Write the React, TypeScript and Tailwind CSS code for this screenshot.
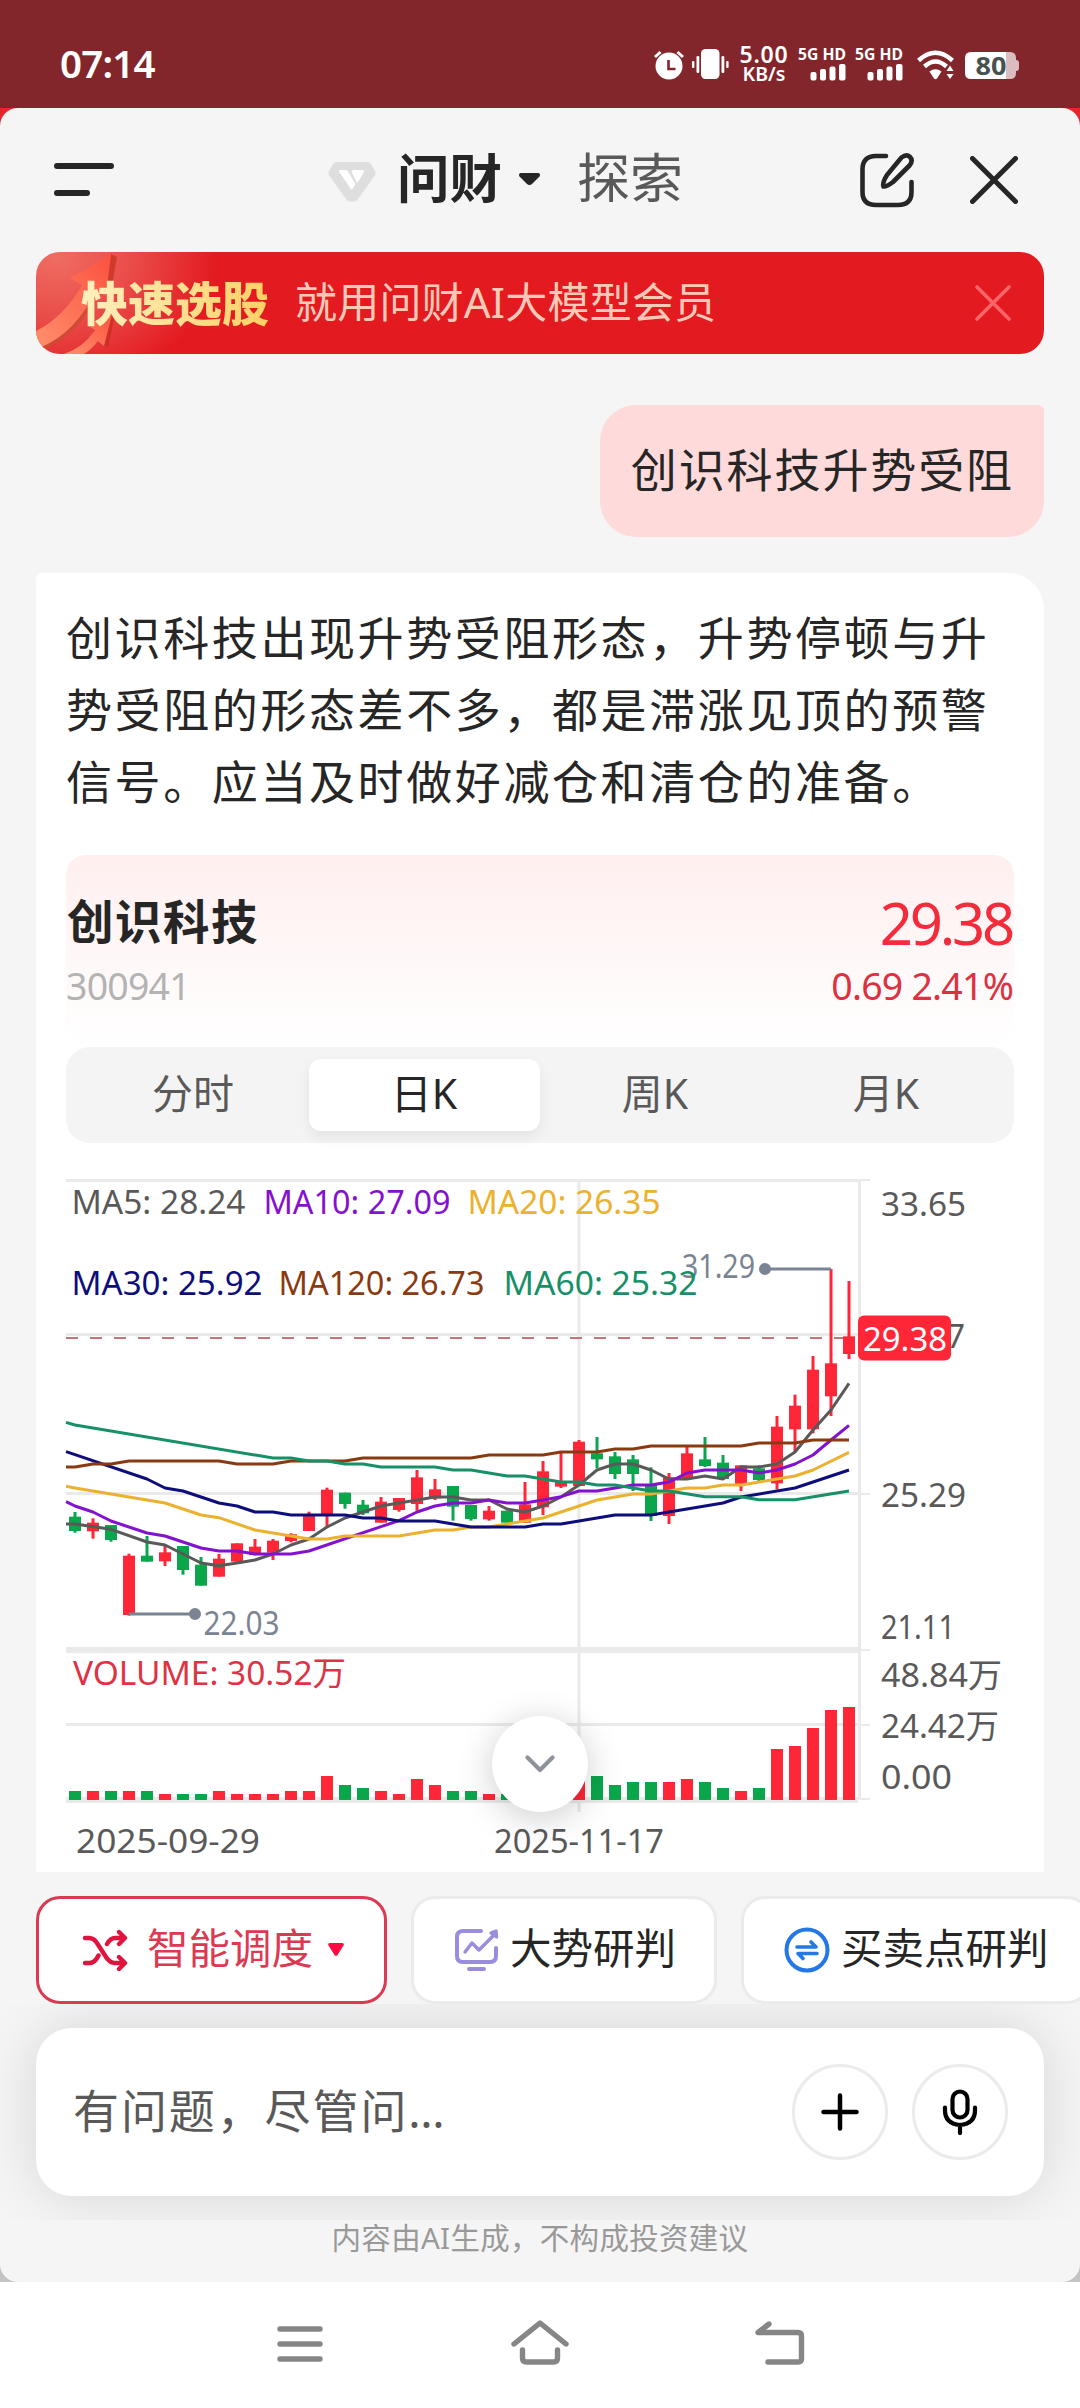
import type { ReactNode } from 'react';

type Candle = [high: number, top: number, bottom: number, low: number, up: boolean, volumeTop: number];

// Values are thirds of a pixel below PRICE_TOP, volumes below VOLUME_TOP.
const PRICE_TOP = 1390;
const VOLUME_TOP = 1630;
const px = (i: number) => 75 + 18 * i;
const py = (v: number) => PRICE_TOP + v / 3;

const candles: Candle[] = [
  [366, 380, 423, 428, false, 483],
  [385, 398, 424, 446, true, 483],
  [405, 405, 450, 455, false, 483],
  [491, 497, 675, 677, true, 483],
  [438, 497, 515, 515, false, 483],
  [468, 487, 514, 528, true, 492],
  [468, 468, 540, 554, false, 492],
  [501, 524, 587, 587, false, 492],
  [492, 506, 560, 560, true, 483],
  [460, 460, 515, 515, true, 492],
  [447, 470, 495, 496, true, 492],
  [447, 452, 488, 510, true, 492],
  [430, 433, 453, 457, true, 483],
  [365, 378, 423, 423, true, 483],
  [293, 299, 375, 412, true, 438],
  [308, 308, 342, 356, false, 465],
  [330, 344, 370, 375, false, 474],
  [321, 335, 398, 398, true, 483],
  [324, 324, 360, 365, true, 492],
  [240, 262, 342, 362, true, 447],
  [267, 298, 325, 330, true, 465],
  [288, 288, 350, 392, false, 483],
  [345, 345, 387, 392, false, 483],
  [348, 362, 388, 392, true, 492],
  [362, 362, 398, 398, false, 492],
  [276, 343, 398, 398, true, 480],
  [213, 244, 352, 375, true, 470],
  [185, 275, 290, 294, true, 465],
  [150, 155, 288, 288, true, 447],
  [141, 190, 208, 235, false, 438],
  [186, 199, 252, 267, false, 465],
  [195, 208, 252, 303, false, 456],
  [232, 285, 378, 393, false, 456],
  [249, 262, 378, 402, true, 456],
  [168, 190, 267, 267, true, 447],
  [141, 208, 228, 231, false, 456],
  [195, 218, 267, 267, false, 474],
  [226, 226, 285, 303, true, 483],
  [226, 235, 270, 273, false, 474],
  [78, 110, 280, 298, true, 357],
  [14, 47, 118, 185, true, 348],
  [-102, -61, 118, 130, true, 294],
  [-363, -80, 19, 78, true, 240],
  [-327, -161, -108, -93, true, 231],
];

const averages: { color: string; points: [number, number][] }[] = [
  {
    color: '#595959',
    points: [[-0.5, 402], [0, 402], [2, 418], [4, 456], [5, 465], [6, 492], [7, 519], [8, 527], [9, 519], [10, 510], [11, 492], [12, 465], [13, 447], [14, 411], [15, 384], [16, 366], [17, 348], [19, 330], [20, 321], [21, 321], [22, 330], [23, 330], [24, 357], [25, 366], [26, 348], [27, 321], [28, 285], [29, 240], [30, 222], [31, 222], [32, 240], [33, 267], [34, 267], [35, 258], [36, 267], [37, 231], [38, 231], [39, 222], [40, 186], [41, 120], [42, 60], [43, -20]],
  },
  {
    color: '#8411cf',
    points: [[-0.5, 335], [0, 348], [1, 366], [2, 393], [4, 429], [5, 438], [7, 474], [8, 483], [9, 483], [10, 492], [12, 492], [13, 483], [17, 410], [18, 392], [19, 366], [20, 348], [21, 339], [22, 339], [23, 330], [24, 339], [25, 339], [26, 330], [27, 320], [28, 303], [29, 303], [30, 294], [31, 285], [32, 285], [33, 276], [34, 249], [35, 240], [37, 240], [38, 249], [39, 240], [40, 222], [41, 195], [42, 150], [43, 106]],
  },
  {
    color: '#ebb12f',
    points: [[-0.5, 289], [0, 294], [5, 339], [7, 375], [8, 383], [10, 420], [13, 447], [14, 447], [15, 438], [18, 438], [20, 420], [21, 420], [22, 411], [23, 411], [24, 402], [26, 384], [29, 330], [31, 312], [32, 312], [34, 294], [35, 294], [36, 285], [37, 285], [40, 258], [41, 240], [43, 187]],
  },
  {
    color: '#0d0d7c',
    points: [[-0.5, 185], [0, 194], [4, 267], [5, 294], [6, 303], [8, 339], [9, 348], [10, 366], [11, 366], [12, 375], [15, 375], [16, 384], [17, 384], [18, 393], [20, 393], [21, 402], [22, 411], [25, 411], [26, 402], [27, 402], [30, 375], [32, 375], [36, 339], [37, 321], [40, 294], [43, 240]],
  },
  {
    color: '#8a3a10',
    points: [[-0.5, 231], [0, 231], [1, 222], [2, 222], [3, 213], [8, 213], [9, 222], [11, 222], [12, 213], [15, 213], [16, 204], [22, 204], [23, 195], [26, 195], [27, 186], [29, 186], [30, 177], [31, 177], [32, 168], [37, 168], [38, 159], [40, 159], [41, 150], [43, 150]],
  },
  {
    color: '#179068',
    points: [[-0.5, 97], [0, 105], [11, 204], [12, 204], [13, 213], [14, 213], [15, 222], [16, 222], [17, 231], [20, 231], [21, 240], [22, 240], [24, 258], [25, 258], [27, 276], [28, 276], [29, 285], [30, 285], [32, 303], [33, 303], [35, 320], [37, 320], [38, 329], [40, 329], [43, 303]],
  },
];

const labels: { text: string; x: number; y: number; width: number; color: string }[] = [
  { text: '31.29', x: 682, y: 1277.5, width: 73, color: '#7b8492' },
  { text: '22.03', x: 203.5, y: 1635, width: 76, color: '#7b8492' },
  { text: 'MA5: 28.24', x: 71.5, y: 1214, width: 174, color: '#595959' },
  { text: 'MA10: 27.09', x: 263.5, y: 1214, width: 187, color: '#8411cf' },
  { text: 'MA20: 26.35', x: 467.5, y: 1214, width: 193, color: '#ebb12f' },
  { text: 'MA30: 25.92', x: 71.5, y: 1294.5, width: 191, color: '#0d0d7c' },
  { text: 'MA120: 26.73', x: 278.5, y: 1294.5, width: 206, color: '#8a3a10' },
  { text: 'MA60: 25.32', x: 503.5, y: 1294.5, width: 194, color: '#179068' },
  { text: 'VOLUME: 30.52万', x: 73, y: 1684.5, width: 273, color: '#dd3344' },
  { text: '33.65', x: 881, y: 1215.5, width: 85, color: '#595959' },
  { text: '29.47', x: 881, y: 1347.5, width: 84, color: '#595959' },
  { text: '25.29', x: 881, y: 1506.5, width: 85, color: '#595959' },
  { text: '21.11', x: 881, y: 1638.5, width: 74, color: '#595959' },
  { text: '48.84万', x: 881, y: 1686.5, width: 121, color: '#595959' },
  { text: '24.42万', x: 881, y: 1738, width: 118, color: '#595959' },
  { text: '0.00', x: 881, y: 1788.5, width: 71, color: '#595959' },
  { text: '2025-09-29', x: 76, y: 1852.5, width: 184, color: '#595959' },
  { text: '2025-11-17', x: 494, y: 1852.5, width: 170, color: '#595959' },
];

const tabs = ['分时', '日K', '周K', '月K'];

export default function App() {
  return (
    <div className="flex h-[2408px] w-[1080px] flex-col overflow-hidden bg-white font-['Noto_Sans','Noto_Sans_CJK_SC',sans-serif] text-[#262626]">
      <StatusBar />
      <div className="h-[2174px] bg-linear-to-b from-[#e6252d] from-50% to-[#c4c4c4] to-50%">
        <div className="flex h-full flex-col overflow-hidden rounded-[18px] bg-[#f5f5f5]">
          <Header />
          <Banner />
          <div className="mt-[51px] mr-9 flex h-[132px] items-center self-end rounded-[36px] rounded-tr-[6px] bg-[#fedbda] pr-[30px] pb-[4px] pl-[31px] text-[46px] tracking-[1.900px]">
            创识科技升势受阻
          </div>
          <Answer />
          <Chips />
          <InputArea />
          <p className="text-center text-[29.500px] leading-[36px] tracking-[0.300px] text-[#999]">
            内容由AI生成，不构成投资建议
          </p>
        </div>
      </div>
      <NavBar />
    </div>
  );
}

function StatusBar() {
  return (
    <div className="flex h-[108px] shrink-0 items-start bg-[#83262b] pl-[60px] text-white">
      <span className="mt-[35px] w-[593px] text-[38.500px] leading-[56px] font-semibold tracking-[-0.800px]">07:14</span>
      <svg className="mt-[49px] shrink-0" width="31" height="31" viewBox="0 0 31 31" fill="none">
        <circle cx="16" cy="17" r="13.500" fill="#fff" />
        <path d="M2 8 7.500 3M30 8 24.500 3" stroke="#fff" strokeWidth="3" />
        <path d="M15.500 11v9h7" stroke="#83262b" strokeWidth="2.600" />
      </svg>
      <svg className="mt-[48px] ml-[8px] shrink-0" width="37" height="32" viewBox="0 0 37 32" fill="#fff">
        <rect x="9" y="1" width="18.500" height="30" rx="4.500" />
        <rect y="13" width="2.400" height="7" rx="1" />
        <rect x="4.500" y="8" width="2.800" height="17" rx="1.200" />
        <rect x="29.500" y="8" width="2.800" height="17" rx="1.200" />
        <rect x="34.200" y="13" width="2.400" height="7" rx="1" />
      </svg>
      <div className="mt-[44px] ml-[9px] w-[52px] text-center font-semibold">
        <div className="text-[23px] leading-[21px] tracking-[0.800px]">5.00</div>
        <div className="text-[19.500px] leading-[18px]">KB/s</div>
      </div>
      <Signal />
      <Signal />
      <svg className="mt-[49px] ml-[13px] shrink-0" width="38" height="31" viewBox="0 0 38 31" fill="none" stroke="#fff">
        <path d="M1.500 11.500Q18.500-4 35.500 11.500M7.500 17.500Q18.500 7.500 29.500 17.500" strokeWidth="4.400" />
        <path d="M12.500 22.500Q18.500 18 24.500 22.500L20 29.500q-1.500 1.500-3 0Z" fill="#fff" stroke="none" />
        <path d="M33 16.500l3.500 5.500h-7zM33 30l3.500-5h-7z" fill="#fff" stroke="none" />
      </svg>
      <svg className="mt-[48px] ml-[10px] shrink-0 overflow-visible" width="56" height="36" viewBox="0 -3 56 36">
        <path d="M40 1h5q6 0 6 6v2q3 0 3 3v5q0 3-3 3v2q0 6-6 6h-5z" fill="#dbbdc0" />
        <path d="M6 1h35v27H6q-6 0-6-6V7q0-6 6-6Z" fill="#fff" />
        <text x="10.500" y="23.500" fontSize="24.500" fontWeight="700" textLength="31" lengthAdjust="spacingAndGlyphs" fill="#485050">80</text>
      </svg>
    </div>
  );
}

function Signal() {
  return (
    <svg className="mt-[41px] ml-[8px] shrink-0 overflow-visible" width="49" height="40" viewBox="0 -4 49 40" fill="#fff">
      <text x="0" y="14.500" fontSize="16.500" fontWeight="700" textLength="48" lengthAdjust="spacingAndGlyphs">5G HD</text>
      <rect x="12.500" y="27" width="6" height="8.500" rx="2" />
      <rect x="22" y="24" width="6" height="11.500" rx="2" />
      <rect x="31.500" y="21.500" width="6" height="14" rx="2" />
      <rect x="41" y="19" width="6.500" height="16.500" rx="2" />
    </svg>
  );
}

function Header() {
  return (
    <header className="flex h-[144px] shrink-0 items-center pl-[54px]">
      <svg width="60" height="34" viewBox="0 0 60 34" stroke="#262626" strokeWidth="6" strokeLinecap="round">
        <path d="M3 3h54M3 30h30" />
      </svg>
      <svg className="mt-[3px] ml-[214px]" width="48" height="41" viewBox="0 0 48 41">
        <path d="M9 1h30q2.500 0 4 2l4 7q1.200 2.500-.5 5L30 38q-2 2.500-4 2.500h-4q-2.500 0-4-2.500L1.500 15q-1.700-2.500-.5-5l4-7q1.500-2 4-2Z" fill="#dedede" />
        <path d="M12.500 9H18q1 0 1.700 1L27.500 23l-3 5q-.9 1-1.700 0L11 10.500q-.5-1.500 1.500-1.500ZM25.500 9h9.500q2 0 1 2l-6 10q-.7 1-1.400 0l-4.500-9q-1-3 1.400-3Z" fill="#fff" />
      </svg>
      <h1 className="mb-[5px] ml-[21px] text-[52.500px] leading-[72px] font-bold">问财</h1>
      <svg className="mt-[-2px] ml-[16px]" width="24" height="14" viewBox="0 0 24 14">
        <path d="M2.500 1h18q2.500 1 1 3.500l-7 7q-3 3-6 0l-7-7Q0 2 2.500 1Z" fill="#262626" />
      </svg>
      <span className="mb-[5px] ml-[35px] text-[53px] leading-[72px] text-[#595959]">探索</span>
      <svg className="ml-[176px]" width="56" height="56" viewBox="0 0 56 56" fill="none" stroke="#262626" strokeWidth="4.600" strokeLinecap="round" strokeLinejoin="round">
        <path d="M27 4H17Q3.500 4 3.500 17.500V40Q3.500 53 17 53h22q13.500 0 13.500-13V30" />
        <path d="M42.500 5.500q5-4 8.500-.5t-.5 8.500L34 30q-6.500 5-9.500 4.500Q23 31 28 23Z" />
      </svg>
      <svg className="ml-[55px]" width="48" height="48" viewBox="0 0 48 48" stroke="#262626" strokeWidth="5" strokeLinecap="round">
        <path d="m2.500 2.500 43 43M45.500 2.500l-43 43" />
      </svg>
    </header>
  );
}

function Banner() {
  return (
    <div className="relative mx-9 flex h-[102px] shrink-0 items-center overflow-hidden rounded-[24px] bg-[#e31b20] bg-[radial-gradient(ellipse_160px_130px_at_20px_5px,#ef6d62_0%,#e94a48_50%,#e31b20_100%)]">
      <svg className="absolute top-0 left-0" width="120" height="102" viewBox="0 0 120 102">
        <defs>
          <linearGradient id="arrow" x1="0" y1="1" x2="1" y2="0">
            <stop offset="0" stopColor="#ff8f6c" />
            <stop offset="1" stopColor="#fb5140" />
          </linearGradient>
        </defs>
        <path d="M75 2 81 5 74 45 68 38 72 20Z" fill="#d03a2a" />
        <path d="M0 79Q28 65 46 33L34 26 75 2 70 44 60 39Q40 80 6 95L0 84Z" fill="url(#arrow)" />
        <path d="M6 95Q40 80 60 39L62 40Q44 82 9 97Z" fill="#d04a34" />
        <path d="M80 57 72 96 67 92 74 60Z" fill="#cf2f24" />
        <path d="M28 102Q48 95 59 78L52 74 77 59 68 94 62 89Q56 97 48 102Z" fill="url(#arrow)" />
      </svg>
      <span className="relative ml-[45px] bg-linear-to-r from-[#fff0bd] to-[#ffd063] bg-clip-text text-[47px] leading-[70px] font-black text-transparent">
        快速选股
      </span>
      <span className="ml-[26px] pb-[2px] text-[42px] leading-[60px] tracking-[0.200px] text-[#ffc9b8]">就用问财AI大模型会员</span>
      <svg className="mr-[33px] ml-auto" width="36" height="36" viewBox="0 0 36 36" stroke="#ff6468" strokeWidth="3.600" strokeLinecap="round">
        <path d="m2 2 32 32M34 2 2 34" />
      </svg>
    </div>
  );
}

function Answer() {
  return (
    <section className="relative mx-9 mt-9 h-[1299px] shrink-0 rounded-tl-[6px] rounded-tr-[36px] bg-white pt-[28px]">
      <p className="pl-[30px] text-[46px] leading-[72px] tracking-[2.600px] whitespace-nowrap">
        创识科技出现升势受阻形态，升势停顿与升
        <br />
        势受阻的形态差不多，都是滞涨见顶的预警
        <br />
        信号。应当及时做好减仓和清仓的准备。
      </p>

      <div className="mx-[30px] mt-[38px] h-[192px] rounded-[20px] bg-linear-to-b from-[#ffefef] to-white pt-[32px]">
        <div className="flex h-[72px] items-center justify-between">
          <span className="pb-[3px] pl-px text-[46.500px] font-bold tracking-[1.500px]">创识科技</span>
          <span className="mr-[-1px] pr-[3px] pb-[2px] text-[58px] tracking-[-3.200px] text-[#f32b3b]">29.38</span>
        </div>
        <div className="flex h-[54px] items-center justify-between text-[37.500px] tracking-[-0.800px]">
          <span className="text-[#b3b3b3]">300941</span>
          <span className="pr-px text-[#dd3141]">0.69 2.41%</span>
        </div>
      </div>

      <div className="mx-[30px] grid h-[96px] grid-cols-4 rounded-[24px] bg-[#f4f4f4] p-3">
        {tabs.map((tab) => (
          <div
            key={tab}
            className={
              tab === '日K'
                ? 'flex items-center justify-center rounded-[12px] bg-white pr-px pb-[3px] text-[41px] shadow-[0_6px_14px_rgba(0,0,0,0.07)]'
                : 'flex items-center justify-center pr-px pb-[3px] text-[41px] text-[#595959]'
            }
          >
            {tab}
          </div>
        ))}
      </div>

      <Chart />

      <button className="absolute top-[1143px] left-[456px] flex size-24 items-center justify-center rounded-full bg-white shadow-[0_6px_36px_rgba(0,0,0,0.2)]">
        <svg width="30" height="18" viewBox="0 0 30 18" fill="none" stroke="#8d929b" strokeWidth="4.200" strokeLinecap="round" strokeLinejoin="round">
          <path d="m2.500 2.500 12.500 12.500L27.500 2.500" />
        </svg>
      </button>
    </section>
  );
}

function Chart() {
  return (
    <svg className="block" width="1008" height="729" viewBox="36 1143 1008 729" fill="none">
      <g stroke="#eaeaea" strokeWidth="3">
        <path d="M66 1180.500H861M66 1334.500H860M66 1493.500H861M66 1724.500H861" />
        <path d="M579 1180V1812M859.500 1180V1800" />
        <path d="M66 1650H861M66 1800H858" strokeWidth="6" />
        <path d="M861 1180H870M861 1494H870M861 1650H870M861 1725H870M861 1799H870" strokeWidth="2" />
      </g>
      <path d="M66 1338H846" stroke="#c4737b" strokeWidth="2" strokeDasharray="12 12" />

      {candles.map(([high, top, bottom, low, up, volumeTop], i) => (
        <g key={i} fill={up ? '#ff2638' : '#0aa64c'}>
          <rect x={px(i) - 1.5} y={py(high)} width="3" height={(low - high) / 3} />
          <rect x={px(i) - 6} y={py(top)} width="12" height={(bottom - top) / 3} />
          <rect x={px(i) - 6} y={VOLUME_TOP + volumeTop / 3} width="12" height={(510 - volumeTop) / 3} />
        </g>
      ))}

      {averages.map(({ color, points }) => (
        <polyline
          key={color}
          points={points.map(([i, v]) => `${px(i)},${py(v)}`).join(' ')}
          stroke={color}
          strokeWidth="3"
          strokeLinejoin="round"
        />
      ))}

      <g stroke="#7b8492" strokeWidth="3">
        <path d="M765 1269H831M129 1614H195" />
        <circle cx="765" cy="1269" r="4.500" fill="#7b8492" />
        <circle cx="195" cy="1614" r="4.500" fill="#7b8492" />
      </g>

      {labels.map(({ text, x, y, width, color }) => (
        <text key={text} x={x} y={y} fontSize="33" textLength={width} lengthAdjust="spacingAndGlyphs" fill={color}>
          {text}
        </text>
      ))}

      <rect x="858" y="1315.500" width="93" height="45" rx="6" fill="#ff2638" />
      <text x="863" y="1350.500" fontSize="33" textLength="84" lengthAdjust="spacingAndGlyphs" fill="#fff">
        29.38
      </text>
    </svg>
  );
}

function Chips() {
  return (
    <div className="flex h-[132px] shrink-0 gap-6 pt-6 pl-9 text-[41.500px] whitespace-nowrap">
      <Chip className="w-[351px] border-[#dc3a52] pl-[43px] text-[#dc3a52]">
        <svg width="46" height="42" viewBox="0 0 46 42" fill="none" stroke="#e0143f" strokeWidth="4.400" strokeLinecap="round" strokeLinejoin="round">
          <path d="M3 9h4q5 0 8 5l9 14q4 6 9 6h9M3 34h4q5 0 8-5l1.500-2.500M25 15q3.500-6 8-6h9M37 3l6 6-6 6M37 28l6 6-6 6" />
        </svg>
        <span className="ml-[19px] pb-[3px]">智能调度</span>
        <svg className="ml-[15px]" width="16" height="14" viewBox="0 0 16 14">
          <path d="M1.500 0h13q2 .5 1 2.500L9.500 12q-1.500 2-3 0L.5 2.500Q-.5.500 1.500 0Z" fill="#ff0a42" />
        </svg>
      </Chip>
      <Chip className="w-[306px] border-[#ebebeb] pl-[41px]">
        <svg width="44" height="44" viewBox="0 0 44 44" fill="none" stroke="#9a8de0" strokeWidth="4" strokeLinecap="round" strokeLinejoin="round">
          <path d="M26 3H8Q2 3 2 9v19q0 6 6 6h27q6 0 6-6V20M14 41h15" />
          <path d="m10 24 7-9 7 7L40 6M36 5l5-2 .5 6z" strokeWidth="3.400" />
        </svg>
        <span className="ml-[11px] pb-[3px]">大势研判</span>
      </Chip>
      <Chip className="w-[350px] border-[#ebebeb] pl-[40px]">
        <svg width="46" height="46" viewBox="0 0 46 46" fill="none" stroke="#2377e6" strokeWidth="4" strokeLinecap="round" strokeLinejoin="round">
          <circle cx="23" cy="23" r="20.500" />
          <path d="M13 20h19l-5-5M33 26.500H14l5 5" strokeWidth="3.600" />
        </svg>
        <span className="ml-[11px] pb-[3px]">买卖点研判</span>
      </Chip>
    </div>
  );
}

function Chip({ className, children }: { className: string; children: ReactNode }) {
  return (
    <div className={`flex h-[108px] shrink-0 items-center rounded-[24px] border-[3px] bg-white ${className}`}>
      {children}
    </div>
  );
}

function InputArea() {
  return (
    <div className="h-[216px] shrink-0 overflow-hidden px-9 pt-6">
      <div className="flex h-[168px] items-center rounded-[36px] bg-white pr-9 pl-[37px] shadow-[0_0_60px_rgba(0,0,0,0.13)]">
        <span className="mr-auto pb-[3px] text-[46px] tracking-[1.900px] text-[#595959]">
          有问题，尽管问<span className="tracking-[-0.300px]">...</span>
        </span>
        <button className="flex size-24 items-center justify-center rounded-full border-[3px] border-[#ebebeb]">
          <svg width="38" height="38" viewBox="0 0 38 38" stroke="#000" strokeWidth="4.500" strokeLinecap="round">
            <path d="M19 2.500v33M2.500 19h33" />
          </svg>
        </button>
        <button className="ml-6 flex size-24 items-center justify-center rounded-full border-[3px] border-[#ebebeb]">
          <svg width="36" height="46" viewBox="0 0 36 46" fill="none" stroke="#000" strokeWidth="4.200" strokeLinecap="round">
            <rect x="10.500" y="2.500" width="15" height="26" rx="7.500" />
            <path d="M3 18.500v3q0 13 15 14.500 15-1.500 15-14.500v-3M18 36v8" />
          </svg>
        </button>
      </div>
    </div>
  );
}

function NavBar() {
  return (
    <nav className="flex h-[126px] shrink-0 items-center bg-white pb-[3px] pl-[276px]">
      <svg className="mt-px" width="48" height="46" viewBox="0 0 48 46" stroke="#868686" strokeWidth="5.400" strokeLinecap="round">
        <path d="M4 8h40M4 23h40M4 38h40" />
      </svg>
      <svg className="ml-[186px]" width="60" height="50" viewBox="0 0 60 50" fill="none" stroke="#868686" strokeWidth="5.400" strokeLinecap="round" strokeLinejoin="round">
        <path d="M4 25 30 4l26 21M12.500 31v8q0 4 4 4h27q4 0 4-4v-8" />
      </svg>
      <svg className="ml-[184px]" width="52" height="50" viewBox="0 0 52 50" fill="none" stroke="#868686" strokeWidth="5.400" strokeLinecap="round" strokeLinejoin="round">
        <path d="M15 5 4 13.500h40q3.500 0 3.500 3.500v23q0 3-3.500 3H14" />
      </svg>
    </nav>
  );
}
